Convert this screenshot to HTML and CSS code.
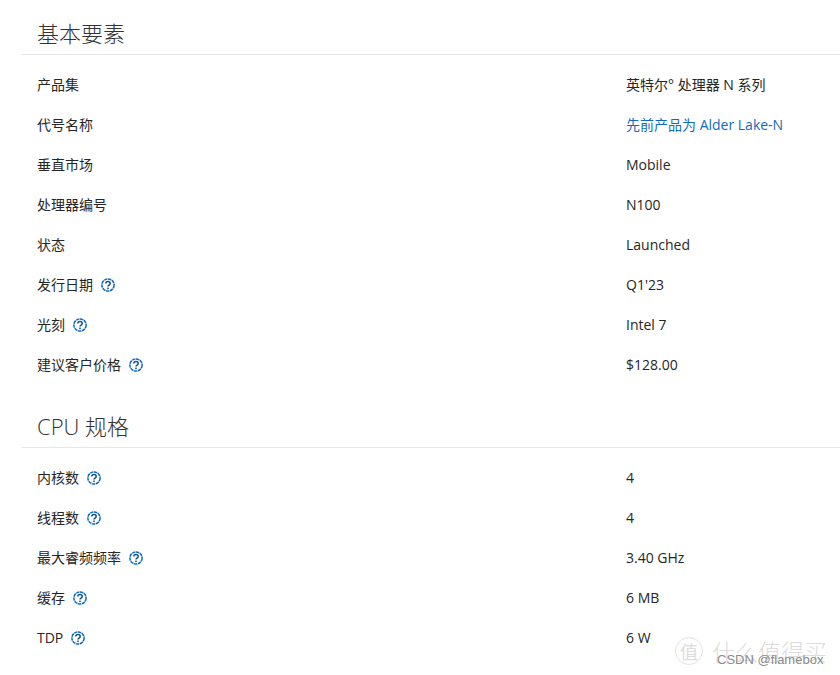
FILE: index.html
```html
<!DOCTYPE html>
<html lang="zh">
<head>
<meta charset="utf-8">
<title>N100</title>
<link rel="stylesheet" href="styles.css">
</head>
<body>
<main class="page">
  <section class="section">
    <h2 class="title">基本要素</h2>
    <div class="rows">
      <div class="row"><div class="label">产品集</div><div class="value">英特尔° 处理器 N 系列</div></div>
      <div class="row"><div class="label">代号名称</div><div class="value"><a class="link" href="#">先前产品为 Alder Lake-N</a></div></div>
      <div class="row"><div class="label">垂直市场</div><div class="value">Mobile</div></div>
      <div class="row"><div class="label">处理器编号</div><div class="value">N100</div></div>
      <div class="row"><div class="label">状态</div><div class="value">Launched</div></div>
      <div class="row"><div class="label">发行日期<svg class="help" viewBox="0 0 14 14"><use href="#q"/></svg></div><div class="value">Q1'23</div></div>
      <div class="row"><div class="label">光刻<svg class="help" viewBox="0 0 14 14"><use href="#q"/></svg></div><div class="value">Intel 7</div></div>
      <div class="row"><div class="label">建议客户价格<svg class="help" viewBox="0 0 14 14"><use href="#q"/></svg></div><div class="value">$128.00</div></div>
    </div>
  </section>
  <section class="section second">
    <h2 class="title">CPU 规格</h2>
    <div class="rows">
      <div class="row"><div class="label">内核数<svg class="help" viewBox="0 0 14 14"><use href="#q"/></svg></div><div class="value">4</div></div>
      <div class="row"><div class="label">线程数<svg class="help" viewBox="0 0 14 14"><use href="#q"/></svg></div><div class="value">4</div></div>
      <div class="row"><div class="label">最大睿频频率<svg class="help" viewBox="0 0 14 14"><use href="#q"/></svg></div><div class="value">3.40 GHz</div></div>
      <div class="row"><div class="label">缓存<svg class="help" viewBox="0 0 14 14"><use href="#q"/></svg></div><div class="value">6 MB</div></div>
      <div class="row"><div class="label">TDP<svg class="help" viewBox="0 0 14 14"><use href="#q"/></svg></div><div class="value">6 W</div></div>
    </div>
  </section>
</main>
<svg class="defs" width="0" height="0">
  <symbol id="q" viewBox="0 0 14 14">
    <circle cx="7" cy="7" r="6.1" fill="none" stroke="#0f6cbd" stroke-width="1.5" stroke-dasharray="3.4 0.6"/>
    <path d="M4.8 5.5c0-1.3 1-2.1 2.2-2.1s2.2.8 2.2 2c0 1.7-2.2 1.7-2.2 3.2" fill="none" stroke="#15508f" stroke-width="1.5"/>
    <rect x="6.2" y="9.6" width="1.6" height="1.5" fill="#15508f"/>
  </symbol>
</svg>
<div class="watermark">
  <div class="wm-top"><span class="wm-logo">值</span><span class="wm-name">什么值得买</span></div>
  <div class="wm-csdn">CSDN @flamebox</div>
</div>
</body>
</html>
```
FILE: styles.css
```css
html, body {
  margin: 0;
  padding: 0;
  background: #fff;
}
body {
  width: 840px;
  height: 675px;
  overflow: hidden;
  position: relative;
  font-family: "Open Sans", "Noto Sans CJK SC", sans-serif;
  color: #262626;
}
.page {
  padding-left: 22px;
}
.section.second {
  margin-top: 22px;
}
.title {
  margin: 0;
  padding: 0 0 0 15px;
  height: 54px;
  line-height: 67px;
  font-size: 22px;
  font-weight: 300;
  color: #333;
  border-bottom: 1px solid #e6e6e6;
}
.second .title {
  height: 40px;
  line-height: 38px;
}
.rows {
  padding-top: 10px;
}
.row {
  display: flex;
  height: 40px;
  align-items: center;
  font-size: 14px;
  line-height: 18px;
}
.label {
  width: 604px;
  padding-left: 15px;
  box-sizing: border-box;
  display: flex;
  align-items: center;
}
.value {
  flex: 1;
}
.link {
  color: #0f6cbd;
  text-decoration: none;
}
.help {
  width: 14px;
  height: 14px;
  margin-left: 8px;
}
.defs {
  position: absolute;
}
.watermark {
  position: absolute;
  left: 675px;
  top: 637px;
  width: 160px;
  height: 32px;
  color: #dcdcdc;
}
.wm-top {
  display: flex;
  align-items: flex-start;
  gap: 9px;
  font-family: "Noto Sans CJK SC", sans-serif;
}
.wm-logo {
  width: 28px;
  height: 28px;
  border: 1.5px solid #e2e2e2;
  border-radius: 50%;
  display: flex;
  align-items: center;
  justify-content: center;
  font-size: 18px;
  box-sizing: border-box;
}
.wm-name {
  font-size: 23px;
  line-height: 28px;
  font-weight: 300;
  white-space: nowrap;
}
.wm-csdn {
  position: absolute;
  left: 42px;
  top: 15px;
  font-family: "Liberation Sans", sans-serif;
  font-size: 13px;
  color: #8a8a8a;
  white-space: nowrap;
}
```
